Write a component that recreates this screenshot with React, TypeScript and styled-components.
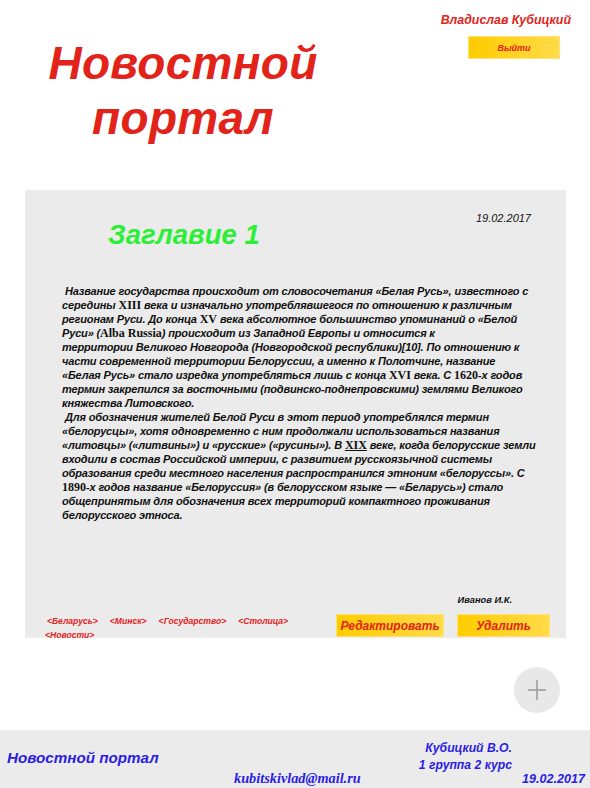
import React from "react";
import styled, { createGlobalStyle } from "styled-components";

const Global = createGlobalStyle`
  html, body { margin: 0; padding: 0; background: #ffffff; }
  body { font-family: "Liberation Sans", Arial, sans-serif; }
`;

const Page = styled.div`
  width: 590px;
  min-height: 788px;
  display: flex;
  flex-direction: column;
`;

const Header = styled.header`
  height: 190px;
  display: flex;
  justify-content: space-between;
  align-items: flex-start;
`;

const SiteTitle = styled.h1`
  margin: 36px 0 0 48px;
  width: 270px;
  text-align: center;
  font-family: "Liberation Sans", Arial, sans-serif;
  font-weight: bold;
  font-style: italic;
  font-size: 46px;
  line-height: 55px;
  color: #e2231a;
  letter-spacing: 0.3px;
`;

const UserBox = styled.div`
  display: flex;
  flex-direction: column;
  align-items: flex-end;
  padding: 13px 19px 0 0;
  gap: 8px;
`;

const UserName = styled.div`
  font-weight: bold;
  font-style: italic;
  font-size: 12.4px;
  line-height: 15px;
  color: #e2231a;
`;

const YellowButton = styled.button<{ $w: number; $h: number; $size: number }>`
  width: ${(p) => p.$w}px;
  height: ${(p) => p.$h}px;
  padding: 0;
  border: 1px solid #ffe27a;
  background: linear-gradient(to right, #ffcc00, #ffdb48);
  color: #e2231a;
  font-family: "Liberation Sans", Arial, sans-serif;
  font-weight: bold;
  font-style: italic;
  font-size: ${(p) => p.$size}px;
  cursor: pointer;
`;

const LogoutButton = styled(YellowButton)`
  margin-right: 11px;
`;

const Panel = styled.article`
  margin-left: 25px;
  width: 541px;
  height: 448px;
  box-sizing: border-box;
  background: #ebebeb;
  display: flex;
  flex-direction: column;
  padding-top: 20px;
`;

const PanelTop = styled.div`
  display: flex;
  justify-content: space-between;
  align-items: flex-start;
  padding: 0 35px 0 83px;
`;

const Heading = styled.h2`
  margin: 10px 0 0 0;
  font-weight: bold;
  font-style: italic;
  font-size: 27.5px;
  line-height: 30px;
  color: #2bef35;
`;

const DateText = styled.div`
  font-style: italic;
  font-size: 11px;
  line-height: 14px;
  color: #111;
  padding-top: 1px;
`;

const Body = styled.div`
  margin: 34px 0 0 37px;
  font-weight: bold;
  font-style: italic;
  font-size: 11px;
  line-height: 14px;
  letter-spacing: -0.15px;
  color: #111;
  white-space: nowrap;
`;

const Para = styled.p`
  margin: 0;
  text-indent: 3px;
`;

const Serif = styled.span<{ $u?: boolean }>`
  font-family: "Liberation Serif", "Times New Roman", serif;
  font-style: normal;
  font-weight: bold;
  font-size: 12px;
  letter-spacing: 0;
  text-decoration: ${(p) => (p.$u ? "underline" : "none")};
`;

const Author = styled.div`
  margin-top: auto;
  align-self: flex-end;
  padding-right: 54px;
  font-weight: bold;
  font-style: italic;
  font-size: 9.3px;
  line-height: 12px;
  color: #111;
`;

const BottomRow = styled.div`
  display: flex;
  align-items: flex-end;
  padding: 8px 16px 1px 20px;
`;

const Tags = styled.div`
  width: 270px;
  display: flex;
  flex-wrap: wrap;
  column-gap: 12px;
  margin-bottom: -5px;
`;

const Tag = styled.span<{ $lead?: boolean }>`
  font-weight: bold;
  font-style: italic;
  font-size: 8.6px;
  line-height: 14px;
  color: #e2231a;
  margin-left: ${(p) => (p.$lead ? "2px" : "0")};
`;

const Actions = styled.div`
  margin-left: auto;
  display: flex;
  gap: 13px;
`;

const FabRow = styled.div`
  display: flex;
  justify-content: flex-end;
  padding: 29px 30px 17px 0;
`;

const Fab = styled.button`
  width: 46px;
  height: 46px;
  border-radius: 50%;
  border: none;
  background: #e8e8e8;
  display: flex;
  align-items: center;
  justify-content: center;
  padding: 0;
`;

const Footer = styled.footer`
  height: 58px;
  background: #ebebeb;
  display: grid;
  grid-template-columns: 227px auto 1fr auto auto;
  padding: 0 5px 0 7px;
  color: #2c1de4;
  font-weight: bold;
  font-style: italic;
`;

const FooterTitle = styled.div`
  align-self: center;
  font-size: 15.2px;
  line-height: 18px;
  padding-bottom: 3px;
`;

const Email = styled.div`
  align-self: end;
  font-family: "Liberation Serif", "Times New Roman", serif;
  font-size: 14.3px;
  line-height: 18px;
  padding-bottom: 1px;
`;

const Credits = styled.div`
  grid-column: 4;
  align-self: start;
  text-align: right;
  padding-top: 10px;
  font-size: 12.2px;
  line-height: 17px;
`;

const FooterDate = styled.div`
  align-self: end;
  margin-left: 10px;
  font-size: 12.6px;
  line-height: 18px;
`;

export default function App() {
  return (
    <Page>
      <Global />
      <Header>
        <SiteTitle>Новостной портал</SiteTitle>
        <UserBox>
          <UserName>Владислав Кубицкий</UserName>
          <LogoutButton $w={92} $h={23} $size={9}>Выйти</LogoutButton>
        </UserBox>
      </Header>

      <Panel>
        <PanelTop>
          <Heading>Заглавие 1</Heading>
          <DateText>19.02.2017</DateText>
        </PanelTop>
        <Body>
          <Para>
            Название государства происходит от словосочетания «Белая Русь», известного с<br />
            середины <Serif>XIII</Serif> века и изначально употреблявшегося по отношению к различным<br />
            регионам  Руси. До конца <Serif>XV</Serif> века абсолютное большинство упоминаний о «Белой<br />
            Руси» (<Serif>Alba Russia</Serif>) происходит из  Западной Европы  и относится к<br />
            территории  Великого Новгорода  (Новгородской республики)[10]. По отношению к<br />
            части современной территории Белоруссии, а именно к  Полотчине, название<br />
            «Белая Русь» стало изредка употребляться лишь с конца <Serif>XVI</Serif> века. С <Serif>1620</Serif>-х годов<br />
            термин закрепился за восточными (подвинско-поднепровскими) землями  Великого<br />
            княжества Литовского.
          </Para>
          <Para>
            Для обозначения жителей Белой Руси в этот период употреблялся термин<br />
            «белорусцы», хотя одновременно с ним продолжали использоваться названия<br />
            «литовцы» («литвины») и «русские» («русины»). В <Serif $u>XIX</Serif> веке, когда белорусские земли<br />
            входили в состав  Российской империи, с развитием русскоязычной системы<br />
            образования среди местного населения распространился этноним «белоруссы». С<br />
            <Serif>1890</Serif>-х годов название «Белоруссия» (в белорусском языке  — «Беларусь») стало<br />
            общепринятым для обозначения всех территорий компактного проживания<br />
            белорусского этноса.
          </Para>
        </Body>
        <Author>Иванов И.К.</Author>
        <BottomRow>
          <Tags>
            <Tag $lead>&lt;Беларусь&gt;</Tag>
            <Tag>&lt;Минск&gt;</Tag>
            <Tag>&lt;Государство&gt;</Tag>
            <Tag>&lt;Столица&gt;</Tag>
            <Tag>&lt;Новости&gt;</Tag>
          </Tags>
          <Actions>
            <YellowButton $w={108} $h={23} $size={12}>Редактировать</YellowButton>
            <YellowButton $w={93} $h={23} $size={12}>Удалить</YellowButton>
          </Actions>
        </BottomRow>
      </Panel>

      <FabRow>
        <Fab aria-label="Добавить">
          <svg width="20" height="22" viewBox="0 0 20 22">
            <line x1="1" y1="11" x2="19" y2="11" stroke="#9a9a9a" strokeWidth="1.5" />
            <line x1="10" y1="1" x2="10" y2="21" stroke="#9a9a9a" strokeWidth="1.5" />
          </svg>
        </Fab>
      </FabRow>

      <Footer>
        <FooterTitle>Новостной портал</FooterTitle>
        <Email>kubitskivlad@mail.ru</Email>
        <Credits>
          Кубицкий В.О.
          <br />1 группа 2 курс
        </Credits>
        <FooterDate>19.02.2017</FooterDate>
      </Footer>
    </Page>
  );
}
